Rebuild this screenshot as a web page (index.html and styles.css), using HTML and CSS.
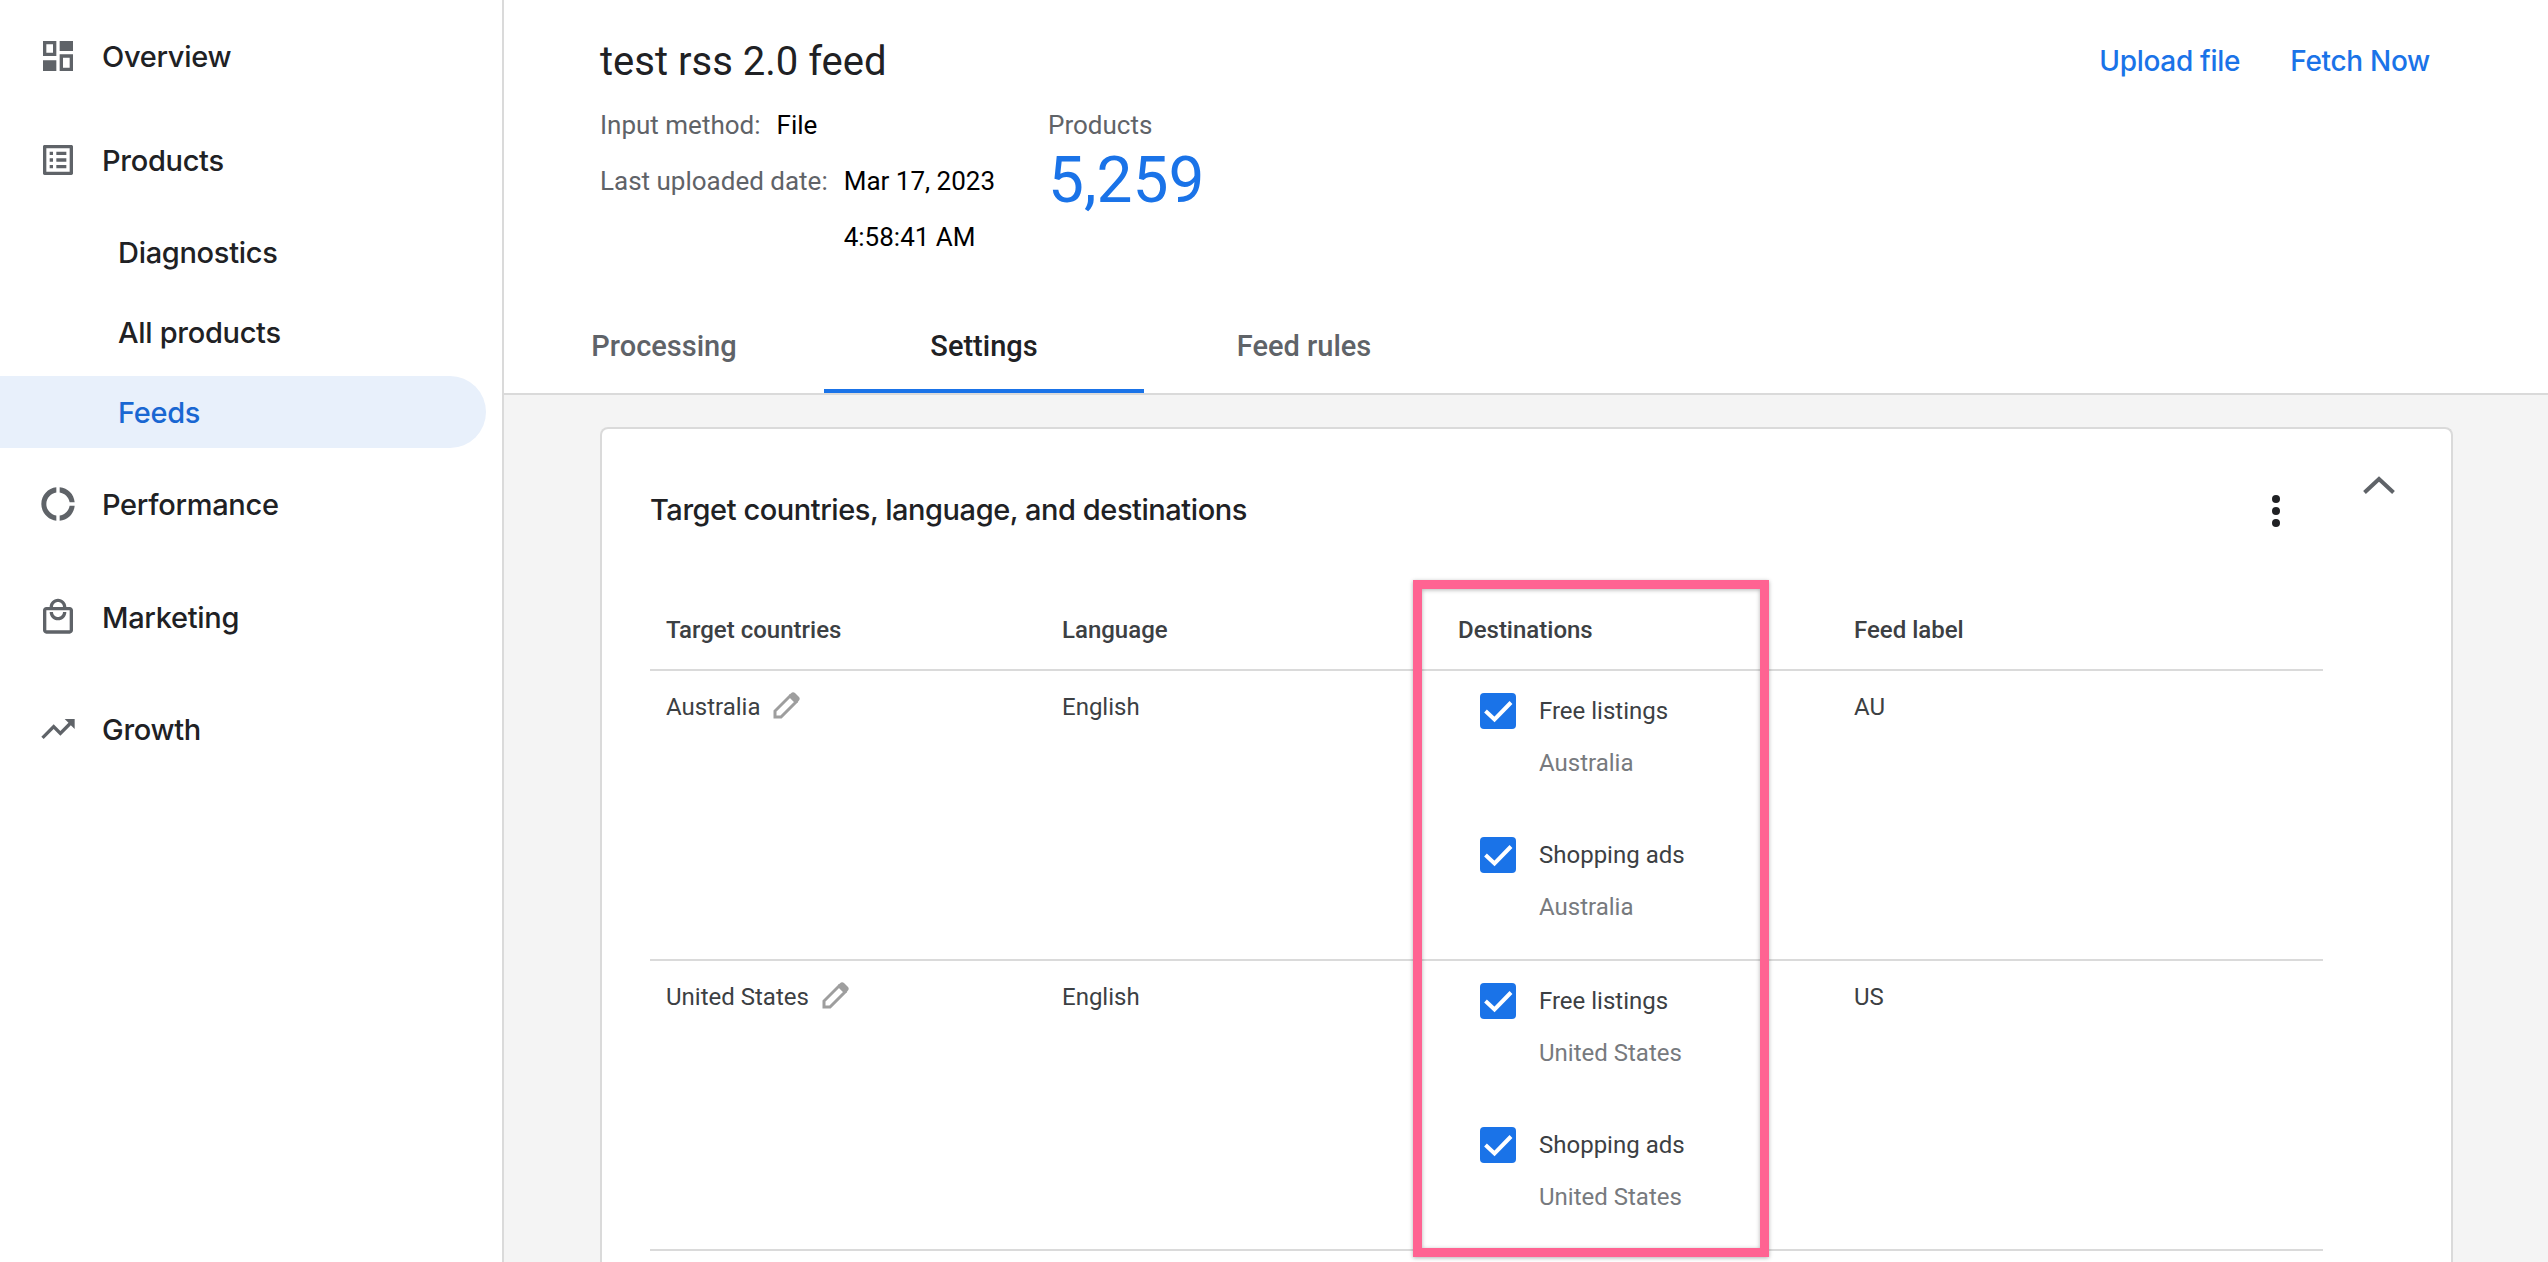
FILE: index.html
```html
<!DOCTYPE html>
<html lang="en">
<head>
    <meta charset="UTF-8">
    <meta name="viewport" content="width=device-width, initial-scale=1.0">
    <title>Feed settings</title>
    <link rel="stylesheet" href="styles.css">
</head>
<body>
    <nav class="sidebar">
        <a class="nav-item nav-overview">
            <svg class="nav-icon" viewBox="0 0 24 24"><path fill-rule="evenodd" d="M3 3h8v9H3zM5 5v5h4V5zM13 3h8v6h-8zM3 14.500h8V21H3zM13 11h8v10h-8zM15 13v6h4v-6z"/></svg>
            Overview
        </a>
        <a class="nav-item nav-products">
            <svg class="nav-icon" viewBox="0 0 24 24"><path d="M19 5v14H5V5h14m1.1-2H3.9c-.5 0-.9.4-.9.9v16.2c0 .4.4.9.9.9h16.2c.4 0 .9-.5.9-.9V3.900c0-.5-.5-.9-.9-.9zM11 7h6v2h-6V7zm0 4h6v2h-6v-2zm0 4h6v2h-6zM7 7h2v2H7zm0 4h2v2H7zm0 4h2v2H7z"/></svg>
            Products
        </a>
        <a class="sub-item sub-diagnostics">Diagnostics</a>
        <a class="sub-item">All products</a>
        <a class="sub-item active">Feeds</a>
        <a class="nav-item nav-performance">
            <svg class="nav-icon" viewBox="0 0 24 24"><path d="M11 5.08V2c-5 .5-9 4.81-9 10s4 9.5 9 10v-3.08c-3-.48-6-3.19-6-6.92s3-6.44 6-6.92zM18.97 11H22c-.47-5-4-8.53-9-9v3.08C16 5.51 18.54 8 18.97 11zM13 18.92V22c5-.47 8.53-4 9-9h-3.03c-.43 3-2.97 5.49-5.97 5.92z"/></svg>
            Performance
        </a>
        <a class="nav-item nav-marketing">
            <svg class="nav-icon" viewBox="0 0 24 24"><path d="M19 6h-2c0-2.76-2.24-5-5-5S7 3.24 7 6H5c-1.1 0-2 .9-2 2v12c0 1.1.9 2 2 2h14c1.1 0 2-.9 2-2V8c0-1.1-.9-2-2-2zm-7-3c1.66 0 3 1.34 3 3H9c0-1.66 1.34-3 3-3zm7 17H5V8h14v12zm-7-8c-1.66 0-3-1.34-3-3H7c0 2.76 2.24 5 5 5s5-2.24 5-5h-2c0 1.66-1.34 3-3 3z"/></svg>
            Marketing
        </a>
        <a class="nav-item nav-growth">
            <svg class="nav-icon" viewBox="0 0 24 24"><path d="M16 6l2.29 2.29-4.88 4.88-4-4L2 16.59 3.41 18l6-6 4 4 6.3-6.29L22 12V6z"/></svg>
            Growth
        </a>
    </nav>

    <main class="main">
        <header class="feed-header">
            <div class="feed-top">
                <h1 class="feed-title">test rss 2.0 feed</h1>
                <div class="feed-actions">
                    <a class="action">Upload file</a>
                    <a class="action">Fetch Now</a>
                </div>
            </div>
            <div class="feed-info">
                <div class="info-list">
                    <div class="info-row">
                        <span class="info-label">Input method:</span>
                        <span>File</span>
                    </div>
                    <div class="info-row">
                        <span class="info-label">Last uploaded date:</span>
                        <div class="info-dates">
                            <span>Mar 17, 2023</span>
                            <span>4:58:41 AM</span>
                        </div>
                    </div>
                </div>
                <div class="product-count">
                    <span class="info-label">Products</span>
                    <span class="count-value">5,259</span>
                </div>
            </div>
            <div class="tabs">
                <a class="tab">Processing</a>
                <a class="tab active">Settings</a>
                <a class="tab">Feed rules</a>
            </div>
        </header>

        <section class="content">
            <div class="card">
                <div class="card-head">
                    <h2 class="card-title">Target countries, language, and destinations</h2>
                    <svg class="more-icon" viewBox="0 0 8 32"><circle cx="4" cy="4" r="4"/><circle cx="4" cy="16" r="4"/><circle cx="4" cy="28" r="4"/></svg>
                    <svg class="chevron-icon" viewBox="0 0 32 18"><path d="M1.5 16.500L16 3l14.500 13.500"/></svg>
                </div>
                <div class="table">
                    <div class="row head-row">
                        <div class="cell">Target countries</div>
                        <div class="cell">Language</div>
                        <div class="cell">Destinations</div>
                        <div class="cell">Feed label</div>
                    </div>
                    <div class="row body-row">
                        <div class="cell country">
                            <span>Australia</span>
                            <svg class="pencil" viewBox="0 0 27 27"><path class="pencil-body" d="M2 25v-6L17 4l6 6L8 25z"/><path class="pencil-cap" d="M16 3l3-2.500q1.500-.8 3 .5l4 4q1.200 1.500.3 3L24 11z"/></svg>
                        </div>
                        <div class="cell">English</div>
                        <div class="cell destinations">
                            <div class="dest">
                                <svg class="check" viewBox="0 0 36 36"><rect width="36" height="36" rx="4"/><path d="M5.500 18l9 8.500L31 9.500"/></svg>
                                <div class="dest-name">Free listings</div>
                                <div class="dest-country">Australia</div>
                            </div>
                            <div class="dest">
                                <svg class="check" viewBox="0 0 36 36"><rect width="36" height="36" rx="4"/><path d="M5.500 18l9 8.500L31 9.500"/></svg>
                                <div class="dest-name">Shopping ads</div>
                                <div class="dest-country">Australia</div>
                            </div>
                        </div>
                        <div class="cell">AU</div>
                    </div>
                    <div class="row body-row">
                        <div class="cell country">
                            <span>United States</span>
                            <svg class="pencil" viewBox="0 0 27 27"><path class="pencil-body" d="M2 25v-6L17 4l6 6L8 25z"/><path class="pencil-cap" d="M16 3l3-2.500q1.500-.8 3 .5l4 4q1.200 1.500.3 3L24 11z"/></svg>
                        </div>
                        <div class="cell">English</div>
                        <div class="cell destinations">
                            <div class="dest">
                                <svg class="check" viewBox="0 0 36 36"><rect width="36" height="36" rx="4"/><path d="M5.500 18l9 8.500L31 9.500"/></svg>
                                <div class="dest-name">Free listings</div>
                                <div class="dest-country">United States</div>
                            </div>
                            <div class="dest">
                                <svg class="check" viewBox="0 0 36 36"><rect width="36" height="36" rx="4"/><path d="M5.500 18l9 8.500L31 9.500"/></svg>
                                <div class="dest-name">Shopping ads</div>
                                <div class="dest-country">United States</div>
                            </div>
                        </div>
                        <div class="cell">US</div>
                    </div>
                </div>
            </div>
        </section>
    </main>

    <div class="highlight-box"></div>
</body>
</html>
```

FILE: styles.css
```css
* {
    box-sizing: border-box;
}
html, body {
    height: 100%;
}
body {
    margin: 0;
    display: flex;
    height: 1262px;
    overflow: hidden;
    font-family: Roboto, "Liberation Sans", sans-serif;
    color: #3c4043;
    background: #fff;
}

/* sidebar */
.sidebar {
    width: 504px;
    flex-shrink: 0;
    border-right: 2px solid #dadada;
    font-family: Inter, Roboto, sans-serif;
    font-weight: 500;
    font-size: 29px;
    letter-spacing: -0.3px;
    color: #202124;
    padding-top: 26px;
}
.nav-item {
    display: flex;
    align-items: center;
    height: 60px;
    padding-left: 38px;
}
.nav-icon {
    width: 40px;
    height: 40px;
    fill: #5f6368;
    margin-right: 24px;
}
.nav-products {
    margin-top: 44px;
}
.nav-performance {
    margin-top: 26px;
}
.nav-marketing {
    margin-top: 53px;
}
.nav-growth {
    margin-top: 52px;
}
.sub-item {
    display: flex;
    align-items: center;
    height: 72px;
    width: 486px;
    padding-left: 118px;
    margin-bottom: 8px;
    border-radius: 0 36px 36px 0;
}
.sub-diagnostics {
    margin-top: 26px;
}
.sub-item.active {
    background: #e8f0fb;
    color: #1967d2;
    margin-bottom: 0;
}

/* header */
.main {
    flex: 1;
    min-width: 0;
    display: flex;
    flex-direction: column;
}
.feed-header {
    height: 395px;
    flex-shrink: 0;
    border-bottom: 2px solid #dadada;
    display: flex;
    flex-direction: column;
}
.feed-top {
    display: flex;
    justify-content: space-between;
    align-items: center;
    padding: 41px 118px 0 96px;
    height: 81px;
}
.feed-title {
    margin: 0;
    font-size: 40px;
    font-weight: 400;
    color: #202124;
}
.feed-actions {
    display: flex;
    gap: 50px;
    font-family: Inter, Roboto, sans-serif;
    font-weight: 500;
    font-size: 28px;
    letter-spacing: -0.3px;
    color: #1a73e8;
}
.feed-info {
    display: flex;
    padding: 16px 0 0 96px;
    font-size: 26px;
    line-height: 56px;
    color: #000;
}
.info-list {
    width: 448px;
}
.info-row {
    display: flex;
    gap: 16px;
}
.info-dates {
    display: flex;
    flex-direction: column;
}
.info-label {
    color: #5f6368;
}
.product-count {
    display: flex;
    flex-direction: column;
}
.count-value {
    font-size: 64px;
    color: #1a73e8;
}
.tabs {
    display: flex;
    margin-top: auto;
}
.tab {
    width: 320px;
    height: 76px;
    display: flex;
    align-items: center;
    justify-content: center;
    padding-bottom: 18px;
    font-size: 29px;
    font-weight: 500;
    color: #5f6368;
}
.tab.active {
    color: #202124;
    border-bottom: 4px solid #1a73e8;
    padding-bottom: 14px;
}

/* card */
.content {
    flex: 1;
    background: #f4f4f4;
    padding: 32px 95px 0 96px;
    min-height: 0;
}
.card {
    height: 100%;
    background: #fff;
    border: 2px solid #dadada;
    border-bottom: 0;
    border-radius: 8px 8px 0 0;
    padding: 0 128px 0 48px;
}
.card-head {
    position: relative;
    height: 120px;
    display: flex;
    align-items: center;
    padding-top: 41px;
}
.card-title {
    margin: 0;
    font-family: Inter, Roboto, sans-serif;
    font-size: 29px;
    font-weight: 500;
    letter-spacing: -0.45px;
    color: #202124;
}
.more-icon {
    position: absolute;
    left: 1622px;
    top: 66px;
    width: 8px;
    height: 32px;
    fill: #202124;
}
.chevron-icon {
    position: absolute;
    left: 1713px;
    top: 47px;
    width: 32px;
    height: 18px;
    fill: none;
    stroke: #5f6368;
    stroke-width: 4px;
}

/* table */
.table {
    font-size: 24px;
}
.row {
    display: grid;
    grid-template-columns: repeat(4, 396px);
    border-bottom: 2px solid #dadada;
}
.head-row {
    height: 122px;
    font-weight: 500;
    align-items: end;
    padding-bottom: 25px;
}
.body-row {
    height: 290px;
}
.cell {
    padding-left: 16px;
}
.body-row .cell {
    padding-top: 21px;
    line-height: 30px;
}
.body-row .country {
    display: flex;
    align-items: flex-start;
    gap: 13px;
}
.pencil {
    width: 27px;
    height: 27px;
}
.pencil-body {
    fill: none;
    stroke: #9e9e9e;
    stroke-width: 3px;
}
.pencil-cap {
    fill: #9e9e9e;
}
.body-row .destinations {
    padding: 22px 0 0 0;
}
.dest {
    display: grid;
    grid-template-columns: 36px auto;
    column-gap: 23px;
    padding-left: 38px;
    height: 144px;
    align-content: start;
}
.check {
    width: 36px;
    height: 36px;
    grid-row: 1;
}
.check rect {
    fill: #1a73e8;
}
.check path {
    fill: none;
    stroke: #fff;
    stroke-width: 4px;
}
.dest-name {
    align-self: center;
    line-height: 36px;
}
.dest-country {
    grid-column: 2;
    margin-top: 19px;
    color: #777a7e;
}

/* pink annotation drawn over the table */
.highlight-box {
    position: absolute;
    left: 1413px;
    top: 580px;
    width: 356px;
    height: 677px;
    border: 9px solid #ff6392;
    box-shadow: 0 1px 4px rgba(0, 0, 0, 0.3), inset 0 1px 4px rgba(0, 0, 0, 0.3);
}
```
